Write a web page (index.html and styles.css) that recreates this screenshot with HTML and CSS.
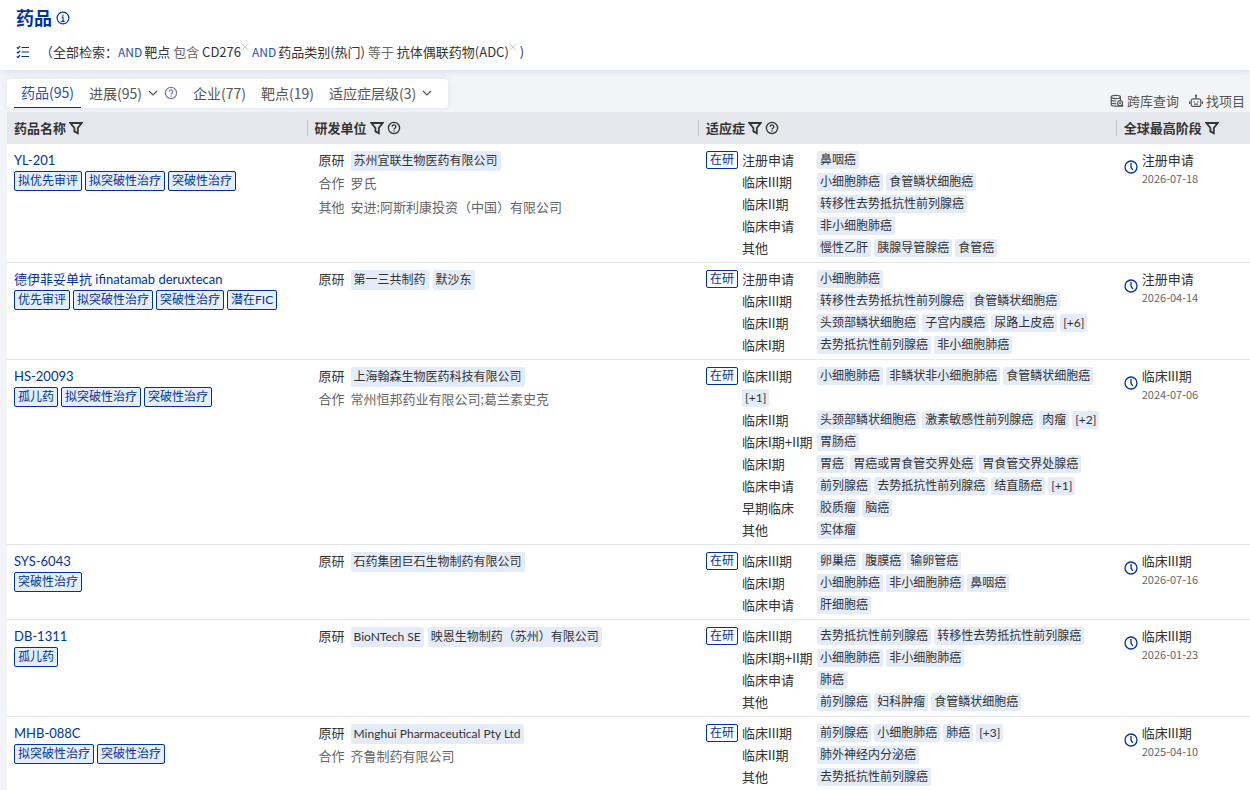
FILE: index.html
```
<!DOCTYPE html>
<html lang="zh-CN">
<head>
    <meta charset="utf-8">
    <title>药品</title>
    <link rel="stylesheet" href="styles.css">
</head>
<body>
    <svg class="sprite" aria-hidden="true">
        <symbol id="filter" viewBox="0 0 14 14"><path d="M1.400 2h11.200L8.800 7v5.200L5.400 10.400V7z" fill="none" stroke="currentColor" stroke-width="1.800"/></symbol>
        <symbol id="help" viewBox="0 0 14 14"><g fill="none" stroke="currentColor" stroke-width="1.300"><circle cx="7" cy="7" r="5.600"/><path d="M5.200 5.700a1.800 1.800 0 1 1 2.700 1.500c-.6.4-.9.6-.9 1.300M7 9.400v1.300"/></g></symbol>
        <symbol id="clock" viewBox="0 0 14 14"><g fill="none" stroke="currentColor" stroke-width="1.300"><circle cx="7" cy="7" r="6"/><path d="M7 3v4.200l1.900 2.800"/></g></symbol>
        <symbol id="down" viewBox="0 0 10 10"><path d="M1 3l4 4 4-4" fill="none" stroke="currentColor" stroke-width="1.200"/></symbol>
        <symbol id="close" viewBox="0 0 8 8"><path d="M.5.5l7 7M7.500.5l-7 7" fill="none" stroke="currentColor"/></symbol>
    </svg>

    <header class="top">
        <div class="title">
            <h1>药品</h1>
            <svg class="icon" viewBox="0 0 14 14"><g fill="none" stroke="currentColor" stroke-width="1.200"><circle cx="7" cy="7" r="5.900"/><path d="M7 3.400v1.400M5.700 6.200H7v4M5.300 10.300h3.400"/></g></svg>
        </div>
        <div class="query">
            <svg class="icon list" viewBox="0 0 14 14"><path d="M5.500 2.500H13M5.500 7H13M5.500 11.500H13M.8 2.300l1.200 1.200 2-2.300M.8 6.800L2 8l2-2.300M.8 11.300l1.200 1.200 2-2.300" fill="none" stroke="currentColor" stroke-width="1.200"/></svg>
            <span class="open">（全部检索：</span>
            <span class="and">AND</span>
            <span>靶点 <span class="op">包含</span> CD276</span>
            <button class="remove" aria-label="移除靶点"><svg><use href="#close"/></svg></button>
            <span class="and">AND</span>
            <span>药品类别(热门) <span class="op">等于</span> 抗体偶联药物(ADC)</span>
            <button class="remove" aria-label="移除药品类别"><svg><use href="#close"/></svg></button>
            <span>)</span>
        </div>
    </header>

    <main>
        <div class="toolbar">
            <nav class="tabs">
                <a class="tab active" href="#">药品(95)</a>
                <a class="tab" href="#">进展(95)<svg class="down"><use href="#down"/></svg><svg class="icon tip"><use href="#help"/></svg></a>
                <a class="tab" href="#">企业(77)</a>
                <a class="tab" href="#">靶点(19)</a>
                <a class="tab" href="#">适应症层级(3)<svg class="down"><use href="#down"/></svg></a>
            </nav>
            <div class="actions">
                <button><svg class="icon" viewBox="0 0 14 14"><g fill="none" stroke="currentColor" stroke-width="1.200"><ellipse cx="5.800" cy="3" rx="4.600" ry="1.600"/><path d="M1.200 3v7.600c0 .9 1.800 1.600 4.600 1.600h7M10.400 3v3M1.200 5.600c0 .9 1.800 1.600 5 1.600M1.200 8.200c0 .9 1.800 1.500 5 1.500"/><circle cx="10" cy="9.200" r="2.500"/><path d="M10 8.300v1.800M9.100 9.200h1.800M11.800 11l1.500 1.200"/></g></svg>跨库查询</button>
                <button><svg class="icon" viewBox="0 0 14 14"><g fill="none" stroke="currentColor" stroke-width="1.200"><rect x="2.200" y="4.800" width="9.600" height="7.600" rx="2"/><path d="M7 4.800V2M.6 7.300v2.800M13.400 7.300v2.800M4.500 7.800h1.300M8.200 7.800h1.300M5 10.200h4"/></g><circle cx="7" cy="1.700" r="1.100" fill="currentColor"/></svg>找项目</button>
            </div>
        </div>

        <table>
            <thead>
                <tr>
                    <th class="col-name"><div class="th">药品名称<svg class="icon"><use href="#filter"/></svg></div></th>
                    <th class="col-org"><div class="th">研发单位<svg class="icon"><use href="#filter"/></svg><svg class="icon"><use href="#help"/></svg></div></th>
                    <th class="col-ind"><div class="th">适应症<svg class="icon"><use href="#filter"/></svg><svg class="icon"><use href="#help"/></svg></div></th>
                    <th><div class="th">全球最高阶段<svg class="icon"><use href="#filter"/></svg></div></th>
                </tr>
            </thead>
            <tbody>
                <tr>
                    <td>
                        <a class="name" href="#">YL-201</a>
                        <div class="tags"><span>拟优先审评</span><span>拟突破性治疗</span><span>突破性治疗</span></div>
                    </td>
                    <td class="orgs">
                        <div class="org origin"><b>原研</b><i>苏州宜联生物医药有限公司</i></div>
                        <div class="org"><b>合作</b>罗氏</div>
                        <div class="org"><b>其他</b>安进;阿斯利康投资（中国）有限公司</div>
                    </td>
                    <td>
                        <div class="ind">
                            <span class="state">在研</span>
                            <div class="phases">
                                <div class="phase"><b>注册申请</b><i>鼻咽癌</i></div>
                                <div class="phase"><b>临床III期</b><i>小细胞肺癌</i><i>食管鳞状细胞癌</i></div>
                                <div class="phase"><b>临床II期</b><i>转移性去势抵抗性前列腺癌</i></div>
                                <div class="phase"><b>临床申请</b><i>非小细胞肺癌</i></div>
                                <div class="phase"><b>其他</b><i>慢性乙肝</i><i>胰腺导管腺癌</i><i>食管癌</i></div>
                            </div>
                        </div>
                    </td>
                    <td><div class="stage"><svg class="icon"><use href="#clock"/></svg><div>注册申请<time>2026-07-18</time></div></div></td>
                </tr>
                <tr>
                    <td>
                        <a class="name" href="#">德伊菲妥单抗 ifinatamab deruxtecan</a>
                        <div class="tags"><span>优先审评</span><span>拟突破性治疗</span><span>突破性治疗</span><span>潜在FIC</span></div>
                    </td>
                    <td class="orgs">
                        <div class="org origin"><b>原研</b><i>第一三共制药</i><i>默沙东</i></div>
                    </td>
                    <td>
                        <div class="ind">
                            <span class="state">在研</span>
                            <div class="phases">
                                <div class="phase"><b>注册申请</b><i>小细胞肺癌</i></div>
                                <div class="phase"><b>临床III期</b><i>转移性去势抵抗性前列腺癌</i><i>食管鳞状细胞癌</i></div>
                                <div class="phase"><b>临床II期</b><i>头颈部鳞状细胞癌</i><i>子宫内膜癌</i><i>尿路上皮癌</i><i>[+6]</i></div>
                                <div class="phase"><b>临床I期</b><i>去势抵抗性前列腺癌</i><i>非小细胞肺癌</i></div>
                            </div>
                        </div>
                    </td>
                    <td><div class="stage"><svg class="icon"><use href="#clock"/></svg><div>注册申请<time>2026-04-14</time></div></div></td>
                </tr>
                <tr>
                    <td>
                        <a class="name" href="#">HS-20093</a>
                        <div class="tags"><span>孤儿药</span><span>拟突破性治疗</span><span>突破性治疗</span></div>
                    </td>
                    <td class="orgs">
                        <div class="org origin"><b>原研</b><i>上海翰森生物医药科技有限公司</i></div>
                        <div class="org"><b>合作</b>常州恒邦药业有限公司;葛兰素史克</div>
                    </td>
                    <td>
                        <div class="ind">
                            <span class="state">在研</span>
                            <div class="phases">
                                <div class="phase"><b>临床III期</b><i>小细胞肺癌</i><i>非鳞状非小细胞肺癌</i><i>食管鳞状细胞癌</i><i>[+1]</i></div>
                                <div class="phase"><b>临床II期</b><i>头颈部鳞状细胞癌</i><i>激素敏感性前列腺癌</i><i>肉瘤</i><i>[+2]</i></div>
                                <div class="phase"><b>临床I期+II期</b><i>胃肠癌</i></div>
                                <div class="phase"><b>临床I期</b><i>胃癌</i><i>胃癌或胃食管交界处癌</i><i>胃食管交界处腺癌</i></div>
                                <div class="phase"><b>临床申请</b><i>前列腺癌</i><i>去势抵抗性前列腺癌</i><i>结直肠癌</i><i>[+1]</i></div>
                                <div class="phase"><b>早期临床</b><i>胶质瘤</i><i>脑癌</i></div>
                                <div class="phase"><b>其他</b><i>实体瘤</i></div>
                            </div>
                        </div>
                    </td>
                    <td><div class="stage"><svg class="icon"><use href="#clock"/></svg><div>临床III期<time>2024-07-06</time></div></div></td>
                </tr>
                <tr>
                    <td>
                        <a class="name" href="#">SYS-6043</a>
                        <div class="tags"><span>突破性治疗</span></div>
                    </td>
                    <td class="orgs">
                        <div class="org origin"><b>原研</b><i>石药集团巨石生物制药有限公司</i></div>
                    </td>
                    <td>
                        <div class="ind">
                            <span class="state">在研</span>
                            <div class="phases">
                                <div class="phase"><b>临床III期</b><i>卵巢癌</i><i>腹膜癌</i><i>输卵管癌</i></div>
                                <div class="phase"><b>临床I期</b><i>小细胞肺癌</i><i>非小细胞肺癌</i><i>鼻咽癌</i></div>
                                <div class="phase"><b>临床申请</b><i>肝细胞癌</i></div>
                            </div>
                        </div>
                    </td>
                    <td><div class="stage"><svg class="icon"><use href="#clock"/></svg><div>临床III期<time>2026-07-16</time></div></div></td>
                </tr>
                <tr>
                    <td>
                        <a class="name" href="#">DB-1311</a>
                        <div class="tags"><span>孤儿药</span></div>
                    </td>
                    <td class="orgs">
                        <div class="org origin"><b>原研</b><i>BioNTech SE</i><i>映恩生物制药（苏州）有限公司</i></div>
                    </td>
                    <td>
                        <div class="ind">
                            <span class="state">在研</span>
                            <div class="phases">
                                <div class="phase"><b>临床III期</b><i>去势抵抗性前列腺癌</i><i>转移性去势抵抗性前列腺癌</i></div>
                                <div class="phase"><b>临床I期+II期</b><i>小细胞肺癌</i><i>非小细胞肺癌</i></div>
                                <div class="phase"><b>临床申请</b><i>肺癌</i></div>
                                <div class="phase"><b>其他</b><i>前列腺癌</i><i>妇科肿瘤</i><i>食管鳞状细胞癌</i></div>
                            </div>
                        </div>
                    </td>
                    <td><div class="stage"><svg class="icon"><use href="#clock"/></svg><div>临床III期<time>2026-01-23</time></div></div></td>
                </tr>
                <tr>
                    <td>
                        <a class="name" href="#">MHB-088C</a>
                        <div class="tags"><span>拟突破性治疗</span><span>突破性治疗</span></div>
                    </td>
                    <td class="orgs">
                        <div class="org origin"><b>原研</b><i>Minghui Pharmaceutical Pty Ltd</i></div>
                        <div class="org"><b>合作</b>齐鲁制药有限公司</div>
                    </td>
                    <td>
                        <div class="ind">
                            <span class="state">在研</span>
                            <div class="phases">
                                <div class="phase"><b>临床III期</b><i>前列腺癌</i><i>小细胞肺癌</i><i>肺癌</i><i>[+3]</i></div>
                                <div class="phase"><b>临床II期</b><i>肺外神经内分泌癌</i></div>
                                <div class="phase"><b>其他</b><i>去势抵抗性前列腺癌</i></div>
                            </div>
                        </div>
                    </td>
                    <td><div class="stage"><svg class="icon"><use href="#clock"/></svg><div>临床III期<time>2025-04-10</time></div></div></td>
                </tr>
            </tbody>
        </table>
    </main>
</body>
</html>
```
FILE: styles.css
```
* {
    box-sizing: border-box;
}

body {
    margin: 0;
    height: 100vh;
    overflow: hidden;
    background: #f3f4f7;
    color: #333;
    font: 13px/22px Lato, "Noto Sans CJK SC", sans-serif;
}

a {
    color: inherit;
    text-decoration: none;
}

button {
    padding: 0;
    border: none;
    background: none;
    color: inherit;
    font: inherit;
    cursor: pointer;
}

b, i {
    font-weight: normal;
    font-style: normal;
}

.sprite {
    display: none;
}

.icon {
    width: 14px;
    height: 14px;
    flex: none;
}

.top {
    height: 70px;
    padding: 7px 16px 0;
    background: #fff;
    box-shadow: 0 1px 8px #d5dbe8;
}

.title {
    display: flex;
    align-items: center;
    gap: 4px;
    color: #0032a0;
}

.title h1 {
    margin: 0;
    font-size: 18px;
    line-height: 22px;
}

.query,
.tabs,
.stage time {
    font-family: "Noto Sans CJK SC", sans-serif;
}

.query {
    display: flex;
    align-items: center;
    margin-top: 12px;
}

.query .list {
    color: #0032a0;
}

.open {
    margin-left: 10px;
}

.and {
    margin-right: 2px;
    color: #2450b8;
    font-size: 12px;
}

.op {
    color: #666;
}

.remove {
    display: flex;
    align-self: flex-start;
    margin-right: 3px;
    padding: 2px 0 0;
    color: #ccc;
}

.remove svg {
    width: 8px;
    height: 8px;
}

main {
    padding-left: 7px;
}

.toolbar {
    display: flex;
    justify-content: space-between;
    align-items: flex-end;
    height: 42px;
    padding-right: 5px;
}

.tabs {
    display: flex;
    gap: 15px;
    height: 29px;
    margin-bottom: 4px;
    padding: 0 14px 0 7px;
    border-radius: 4px;
    background: #fff;
    box-shadow: 0 0 6px #dfe4ee;
    color: #555;
    font-size: 14px;
    line-height: 26px;
}

.tab {
    display: flex;
    align-items: center;
    padding-bottom: 2px;
}

.tab.active {
    margin-right: -7px;
    padding: 0 7px 2px;
    border-bottom: 1px solid #0032a0;
    color: #2450b8;
}

.down {
    width: 10px;
    height: 10px;
    margin: 0 2px 0 6px;
}

.tip {
    margin-left: 4px;
    color: #7584a3;
}

.actions {
    display: flex;
    gap: 10px;
    color: #555;
}

.actions button {
    display: flex;
    align-items: center;
    gap: 3px;
}

table {
    width: 100%;
    border-collapse: collapse;
    table-layout: fixed;
    background: #fff;
}

.col-name {
    width: 24.1%;
}

.col-org {
    width: 31.5%;
}

.col-ind {
    width: 33.6%;
}

th {
    height: 32px;
    padding: 0;
    background: #e6e7ed;
    text-align: left;
}

.th {
    display: flex;
    align-items: center;
    gap: 3px;
    height: 16px;
    padding-left: 7px;
}

th + th .th {
    border-left: 1px solid #c4c6cc;
}

td {
    padding: 5px 7px 3px;
    border-bottom: 1px solid #e6e7ed;
    vertical-align: top;
}

td + td {
    padding-left: 8px;
}

.name {
    display: block;
    color: #0032a0;
}

.tags {
    display: flex;
    flex-wrap: wrap;
    gap: 3px;
}

.tags span,
.state {
    padding: 0 3px;
    border: 1px solid #0032a0;
    border-radius: 2px;
    background: #e6edfb;
    color: #0032a0;
    font-size: 12px;
    line-height: 18px;
}

.org {
    display: flex;
    padding-left: 4px;
    gap: 4px;
    color: #666;
    line-height: 24px;
}

.org b {
    width: 28px;
}

.origin {
    color: #333;
    line-height: 22px;
}

.org i,
.phase i {
    padding: 0 3px;
    border-radius: 2px;
    background: #e4ecfa;
    color: #333;
    font-size: 12px;
    line-height: 18px;
}

.org i {
    margin-top: 2px;
    line-height: 20px;
}

.ind {
    display: flex;
    align-items: flex-start;
    gap: 4px;
}

.state {
    flex: none;
    margin-top: 2px;
    background: #fff;
    line-height: 16px;
}

.phase {
    display: flex;
    flex-wrap: wrap;
    gap: 0 3px;
}

.phase b {
    width: 72px;
    white-space: nowrap;
}

.phase i {
    margin: 2px 0;
}

.stage {
    display: flex;
    align-items: center;
    gap: 4px;
}

.stage .icon {
    color: #0032a0;
}

.stage time {
    display: block;
    color: #666;
    font-size: 11px;
    line-height: 14px;
}
```
